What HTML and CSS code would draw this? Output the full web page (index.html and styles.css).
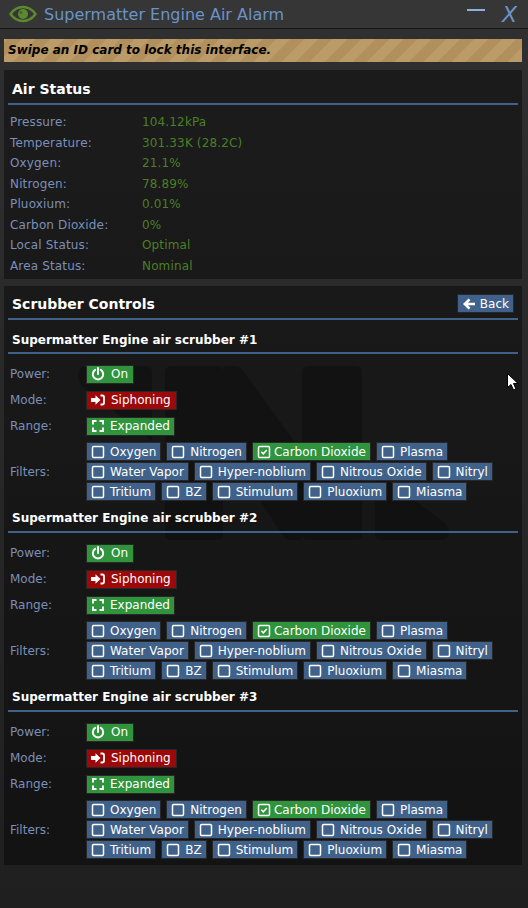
FILE: index.html
```html
<!DOCTYPE html>
<html>
<head>
  <meta charset="UTF-8">
  <title>Supermatter Engine Air Alarm</title>
  <link rel="stylesheet" href="styles.css">
</head>
<body>
  <svg class="defs" width="0" height="0">
    <symbol id="i-power" viewBox="0 0 14 14"><path d="M4.200 2.900a5.200 5.200 0 1 0 5.600 0M7 1v6" fill="none" stroke="currentColor" stroke-width="2" stroke-linecap="round"/></symbol>
    <symbol id="i-signin" viewBox="0 0 14 14"><path d="M0 5h4.500V2.300L9.500 7l-5 4.700V9H0z" fill="currentColor"/><path d="M9.500 2.500h1.800a1.700 1.700 0 0 1 1.700 1.700v5.600a1.700 1.700 0 0 1-1.700 1.700H9.500" fill="none" stroke="currentColor" stroke-width="1.800"/></symbol>
    <symbol id="i-expand" viewBox="0 0 14 14"><path d="M2 5.500V2h3.500M8.500 2H12v3.500M12 8.500V12H8.500M5.500 12H2V8.500" fill="none" stroke="currentColor" stroke-width="2"/></symbol>
    <symbol id="i-box" viewBox="0 0 14 14"><rect x="1.500" y="1.500" width="11" height="11" rx="1.200" fill="none" stroke="currentColor" stroke-width="1.500"/></symbol>
    <symbol id="i-check" viewBox="0 0 14 14"><rect x="1.500" y="1.500" width="11" height="11" rx="1.200" fill="none" stroke="currentColor" stroke-width="1.500"/><path d="M4.300 6.800l2 2 3.500-3.800" fill="none" stroke="currentColor" stroke-width="1.600"/></symbol>
    <symbol id="i-back" viewBox="0 0 14 14"><path d="M7.500 2.300L2.800 7l4.700 4.700M3 7h10" fill="none" stroke="currentColor" stroke-width="2.600"/></symbol>
  </svg>

  <div class="titlebar">
    <svg class="eye" width="28" height="18" viewBox="0 0 28 18">
      <path d="M1.500 9C5 4 9 2 14 2s9 2 12.500 7C23 14 19 16 14 16S5 14 1.500 9z" fill="none" stroke="#5c8a2e" stroke-width="2.400"/>
      <circle cx="14" cy="9" r="5" fill="#5c8a2e"/>
      <circle cx="12" cy="7.500" r="1.500" fill="#363636" opacity="0.5"/>
    </svg>
    <span class="title">Supermatter Engine Air Alarm</span>
    <span class="minimize"></span>
    <span class="close">X</span>
  </div>

  <div class="notice">Swipe an ID card to lock this interface.</div>

  <div class="section status">
    <div class="section-head"><h2>Air Status</h2></div>
    <div class="stat"><span class="label">Pressure:</span><span class="val">104.12kPa</span></div>
    <div class="stat"><span class="label">Temperature:</span><span class="val">301.33K (28.2C)</span></div>
    <div class="stat"><span class="label">Oxygen:</span><span class="val">21.1%</span></div>
    <div class="stat"><span class="label">Nitrogen:</span><span class="val">78.89%</span></div>
    <div class="stat"><span class="label">Pluoxium:</span><span class="val">0.01%</span></div>
    <div class="stat"><span class="label">Carbon Dioxide:</span><span class="val">0%</span></div>
    <div class="stat"><span class="label">Local Status:</span><span class="val">Optimal</span></div>
    <div class="stat"><span class="label">Area Status:</span><span class="val">Nominal</span></div>
  </div>

  <div class="section controls">
    <svg class="watermark" width="372" height="176" viewBox="78 366 372 176">
      <path d="M86 366H146Q152 366 152 372V441L82 386Q78 382 78 376Q78 366 86 366z" />
      <path d="M171 366H217Q223 366 223 372V534Q223 540 217 540H171Q165 540 165 534V372Q165 366 171 366z" />
      <path d="M223 366H236Q240 366 244 372L302 452V540H290Q286 540 282 534L223 446z" />
      <path d="M308 366H356Q362 366 362 372V534Q362 540 356 540H308Q302 540 302 534V372Q302 366 308 366z" />
      <path d="M375 471L444 522Q449 527 449 532Q449 540 440 540H381Q375 540 375 534z" />
    </svg>
    <div class="section-head">
      <h2>Scrubber Controls</h2>
      <a class="btn back"><svg class="icon"><use href="#i-back"/></svg>Back</a>
    </div>

    <div class="scrubber">
      <h3>Supermatter Engine air scrubber #1</h3>
      <div class="row"><span class="row-label">Power:</span><a class="btn green roomy"><svg class="icon"><use href="#i-power"/></svg>On</a></div>
      <div class="row"><span class="row-label">Mode:</span><a class="btn red roomy"><svg class="icon"><use href="#i-signin"/></svg>Siphoning</a></div>
      <div class="row"><span class="row-label">Range:</span><a class="btn green"><svg class="icon"><use href="#i-expand"/></svg>Expanded</a></div>
      <div class="row filters">
        <span class="row-label">Filters:</span>
        <div class="filter-list">
          <a class="btn"><svg class="icon"><use href="#i-box"/></svg>Oxygen</a>
          <a class="btn"><svg class="icon"><use href="#i-box"/></svg>Nitrogen</a>
          <a class="btn green"><svg class="icon"><use href="#i-check"/></svg>Carbon Dioxide</a>
          <a class="btn"><svg class="icon"><use href="#i-box"/></svg>Plasma</a>
          <a class="btn"><svg class="icon"><use href="#i-box"/></svg>Water Vapor</a>
          <a class="btn"><svg class="icon"><use href="#i-box"/></svg>Hyper-noblium</a>
          <a class="btn"><svg class="icon"><use href="#i-box"/></svg>Nitrous Oxide</a>
          <a class="btn"><svg class="icon"><use href="#i-box"/></svg>Nitryl</a>
          <a class="btn"><svg class="icon"><use href="#i-box"/></svg>Tritium</a>
          <a class="btn"><svg class="icon"><use href="#i-box"/></svg>BZ</a>
          <a class="btn"><svg class="icon"><use href="#i-box"/></svg>Stimulum</a>
          <a class="btn"><svg class="icon"><use href="#i-box"/></svg>Pluoxium</a>
          <a class="btn"><svg class="icon"><use href="#i-box"/></svg>Miasma</a>
        </div>
      </div>
    </div>

    <div class="scrubber">
      <h3>Supermatter Engine air scrubber #2</h3>
      <div class="row"><span class="row-label">Power:</span><a class="btn green roomy"><svg class="icon"><use href="#i-power"/></svg>On</a></div>
      <div class="row"><span class="row-label">Mode:</span><a class="btn red roomy"><svg class="icon"><use href="#i-signin"/></svg>Siphoning</a></div>
      <div class="row"><span class="row-label">Range:</span><a class="btn green"><svg class="icon"><use href="#i-expand"/></svg>Expanded</a></div>
      <div class="row filters">
        <span class="row-label">Filters:</span>
        <div class="filter-list">
          <a class="btn"><svg class="icon"><use href="#i-box"/></svg>Oxygen</a>
          <a class="btn"><svg class="icon"><use href="#i-box"/></svg>Nitrogen</a>
          <a class="btn green"><svg class="icon"><use href="#i-check"/></svg>Carbon Dioxide</a>
          <a class="btn"><svg class="icon"><use href="#i-box"/></svg>Plasma</a>
          <a class="btn"><svg class="icon"><use href="#i-box"/></svg>Water Vapor</a>
          <a class="btn"><svg class="icon"><use href="#i-box"/></svg>Hyper-noblium</a>
          <a class="btn"><svg class="icon"><use href="#i-box"/></svg>Nitrous Oxide</a>
          <a class="btn"><svg class="icon"><use href="#i-box"/></svg>Nitryl</a>
          <a class="btn"><svg class="icon"><use href="#i-box"/></svg>Tritium</a>
          <a class="btn"><svg class="icon"><use href="#i-box"/></svg>BZ</a>
          <a class="btn"><svg class="icon"><use href="#i-box"/></svg>Stimulum</a>
          <a class="btn"><svg class="icon"><use href="#i-box"/></svg>Pluoxium</a>
          <a class="btn"><svg class="icon"><use href="#i-box"/></svg>Miasma</a>
        </div>
      </div>
    </div>

    <div class="scrubber">
      <h3>Supermatter Engine air scrubber #3</h3>
      <div class="row"><span class="row-label">Power:</span><a class="btn green roomy"><svg class="icon"><use href="#i-power"/></svg>On</a></div>
      <div class="row"><span class="row-label">Mode:</span><a class="btn red roomy"><svg class="icon"><use href="#i-signin"/></svg>Siphoning</a></div>
      <div class="row"><span class="row-label">Range:</span><a class="btn green"><svg class="icon"><use href="#i-expand"/></svg>Expanded</a></div>
      <div class="row filters">
        <span class="row-label">Filters:</span>
        <div class="filter-list">
          <a class="btn"><svg class="icon"><use href="#i-box"/></svg>Oxygen</a>
          <a class="btn"><svg class="icon"><use href="#i-box"/></svg>Nitrogen</a>
          <a class="btn green"><svg class="icon"><use href="#i-check"/></svg>Carbon Dioxide</a>
          <a class="btn"><svg class="icon"><use href="#i-box"/></svg>Plasma</a>
          <a class="btn"><svg class="icon"><use href="#i-box"/></svg>Water Vapor</a>
          <a class="btn"><svg class="icon"><use href="#i-box"/></svg>Hyper-noblium</a>
          <a class="btn"><svg class="icon"><use href="#i-box"/></svg>Nitrous Oxide</a>
          <a class="btn"><svg class="icon"><use href="#i-box"/></svg>Nitryl</a>
          <a class="btn"><svg class="icon"><use href="#i-box"/></svg>Tritium</a>
          <a class="btn"><svg class="icon"><use href="#i-box"/></svg>BZ</a>
          <a class="btn"><svg class="icon"><use href="#i-box"/></svg>Stimulum</a>
          <a class="btn"><svg class="icon"><use href="#i-box"/></svg>Pluoxium</a>
          <a class="btn"><svg class="icon"><use href="#i-box"/></svg>Miasma</a>
        </div>
      </div>
    </div>
  </div>

  <svg class="cursor" width="12" height="18" viewBox="0 0 12 18">
    <path d="M.5.500v14l3.500-3 2.500 5.500 2.500-1-2.500-5.500h4.500z" fill="#fff" stroke="#000" stroke-width="1"/>
  </svg>
</body>
</html>
```

FILE: styles.css
```css
* { box-sizing: border-box; }
body {
  margin: 0;
  height: 908px;
  overflow: hidden;
  position: relative;
  background: linear-gradient(#303030, #1f1f1f);
  color: #fff;
  font-family: "DejaVu Sans", Verdana, sans-serif;
  font-size: 12px;
}
.defs { position: absolute; }
.titlebar {
  display: flex;
  align-items: center;
  height: 29px;
  padding-left: 9px;
  background: #363636;
  border-bottom: 1px solid #181818;
}
.eye { flex: none; margin-right: 7px; }
.title {
  flex: 1;
  color: #6a93c9;
  font-size: 16px;
  white-space: nowrap;
}
.minimize {
  width: 18px;
  height: 2px;
  margin: 0 17px 9px 0;
  background: #8fb0dc;
}
.close {
  margin-right: 11px;
  color: #6a93c9;
  font-size: 22px;
  font-style: italic;
}
.notice {
  height: 23px;
  margin: 10px 6px 0 4px;
  padding-left: 4px;
  line-height: 23px;
  color: #000;
  font-weight: bold;
  font-style: italic;
  background: repeating-linear-gradient(-45deg, #bb9b68, #bb9b68 10px, #b1905d 10px, #b1905d 20px);
}
.section {
  position: relative;
  margin: 8px 6px 0 4px;
  padding: 0 4px;
  background: rgba(0, 0, 0, 0.4);
}
.status { height: 209px; }
.controls {
  height: 579px;
  margin-top: 7px;
}
.watermark {
  position: absolute;
  left: 74px;
  top: 80px;
  fill: rgba(0, 0, 0, 0.22);
}
.section-head {
  position: relative;
  display: flex;
  justify-content: space-between;
  align-items: center;
  height: 35px;
  padding: 4px 4px 0;
  border-bottom: 2px solid #40628a;
}
.status .section-head { margin-bottom: 6.75px; }
.controls .section-head { height: 34px; }
h2 {
  margin: 0;
  font-size: 14px;
  font-weight: bold;
}
h3 {
  position: relative;
  margin: 0 0 7px;
  height: 32px;
  padding: 8px 4px 0;
  font-size: 12px;
  line-height: 18px;
  border-bottom: 2px solid #40628a;
}
.section-head + .scrubber h3 {
  height: 34px;
  padding-top: 11px;
}
.stat {
  display: flex;
  align-items: center;
  height: 20.5px;
  padding-left: 2px;
  letter-spacing: 0.15px;
}
.label, .row-label { color: #7b8fb8; }
.label { width: 132px; }
.val { color: #4b7f26; }
.scrubber { position: relative; }
.row {
  display: flex;
  align-items: center;
  height: 26px;
  padding-left: 2px;
}
.row-label { flex: none; width: 76px; }
.filters { height: auto; margin-top: 3px; }
.filter-list {
  display: flex;
  flex-wrap: wrap;
  gap: 1px 5px;
  width: 430px;
}
.btn {
  display: inline-flex;
  align-items: center;
  height: 19px;
  padding: 0 4px;
  color: #fff;
  background: #40628a;
  border: 1px solid #272727;
  white-space: nowrap;
}
.btn.green { background: #2f943c; }
.btn.red { background: #9d0808; }
.back {
  margin-top: -1px;
  margin-right: 0;
}
.back .icon { margin-right: 4px; }
.icon {
  flex: none;
  width: 14px;
  height: 14px;
  margin-right: 5px;
}
.roomy { padding-right: 5px; }
.roomy .icon { margin-right: 6px; }
.filter-list .green .icon { margin-right: 3px; }
.cursor {
  position: absolute;
  left: 507px;
  top: 373px;
}
```
